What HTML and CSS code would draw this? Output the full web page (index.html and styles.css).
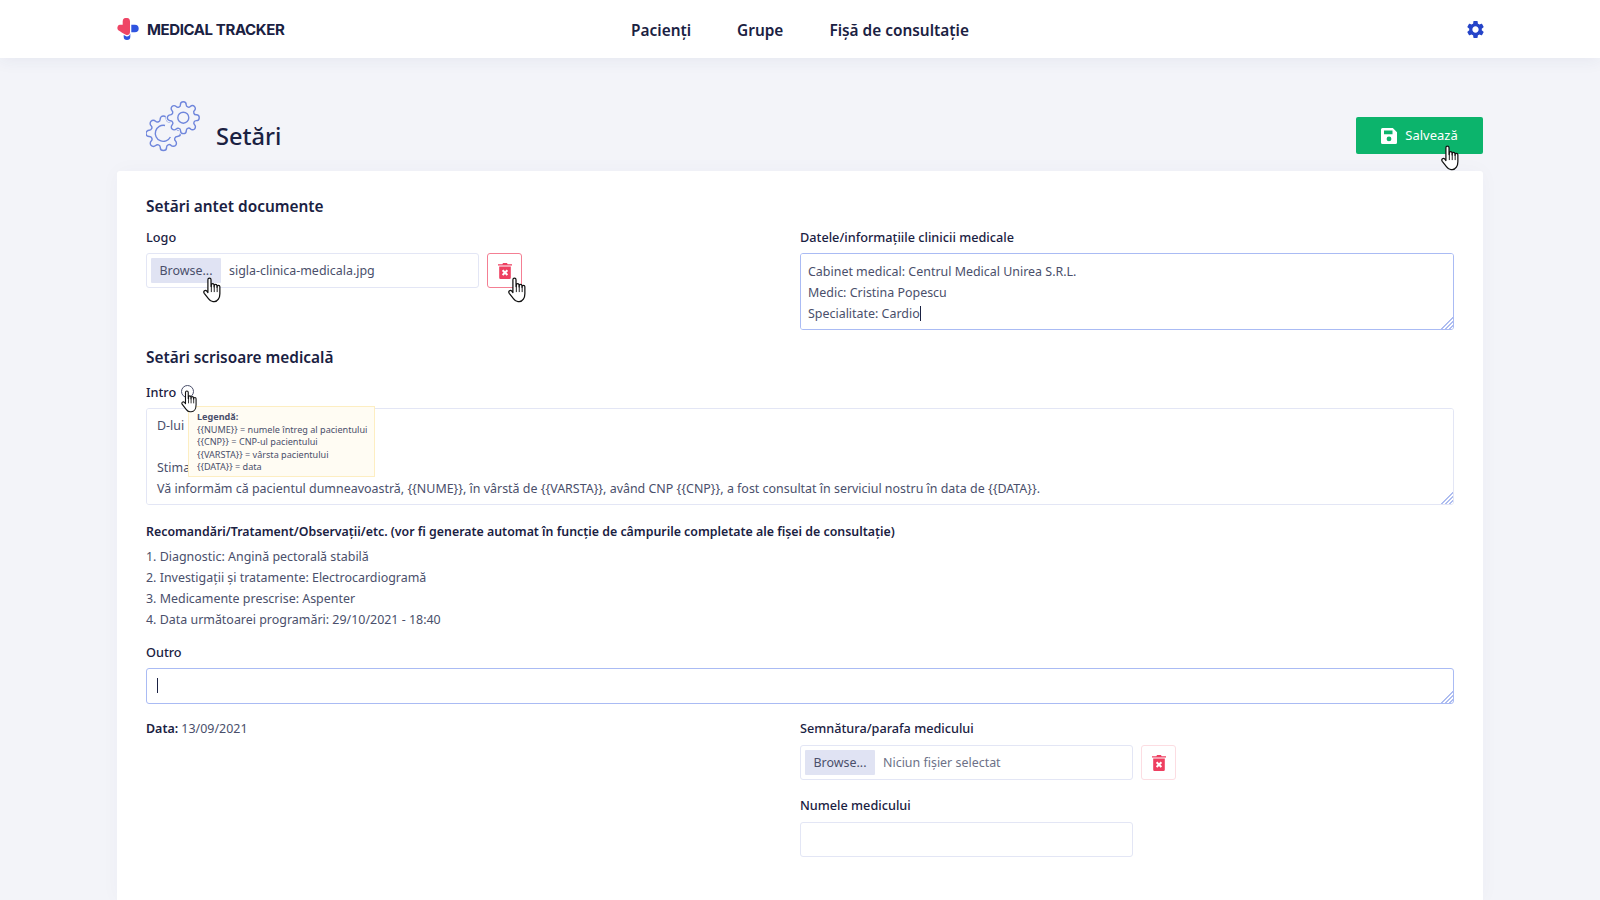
FILE: index.html
```html
<!DOCTYPE html>
<html lang="ro">

<head>
    <meta charset="UTF-8">
    <title>Medical Tracker - Setări</title>
    <link rel="stylesheet" href="styles.css">
</head>

<body>
    <svg class="defs" width="0" height="0">
        <defs>
            <symbol id="hand" viewBox="0 0 19 25">
                <path fill="#fff" stroke="#111" stroke-width="1.200" stroke-linejoin="round" d="M4.600 2.600a1.500 1.500 0 0 1 3 0v6.600h.3V7.700a1.300 1.300 0 0 1 2.600 0v1.700h.2V8.500a1.300 1.300 0 0 1 2.600 0v1.400h.2v-.5a1.300 1.300 0 0 1 2.600 0V16c0 4-2 7.600-5.400 7.600H9.500c-2 0-3.200-1-4.200-2.500L1.100 15.700c-.7-1-.5-1.900.2-2.500.8-.6 1.700-.3 2.300.4l1 1.300z" />
                <path fill="none" stroke="#111" stroke-width=".9" d="M7.900 9.500v5M10.700 9.500v5M13.500 10v4.500" />
            </symbol>
            <symbol id="trash" viewBox="0 0 14 16">
                <path fill="currentColor" d="M5 0h4l.6 1.200H14v1.300H0V1.200h4.400zM1.200 3.500h11.600v11.300a1.200 1.200 0 0 1-1.200 1.200H2.400a1.200 1.200 0 0 1-1.200-1.200z" />
                <path fill="none" stroke="#fff" stroke-width="2" d="M4.600 7.200l4.800 4.800M9.400 7.200l-4.800 4.800" />
            </symbol>
            <path id="gear" d="M19.400 15a1.650 1.650 0 0 0 .33 1.820l.06.06a2 2 0 0 1 0 2.830 2 2 0 0 1-2.830 0l-.06-.06a1.650 1.650 0 0 0-1.820-.33 1.650 1.650 0 0 0-1 1.510V21a2 2 0 0 1-2 2 2 2 0 0 1-2-2v-.09A1.650 1.650 0 0 0 9 19.400a1.650 1.650 0 0 0-1.820.33l-.06.06a2 2 0 0 1-2.830 0 2 2 0 0 1 0-2.830l.06-.06a1.650 1.650 0 0 0 .33-1.820 1.650 1.650 0 0 0-1.510-1H3a2 2 0 0 1-2-2 2 2 0 0 1 2-2h.09A1.650 1.650 0 0 0 4.600 9a1.650 1.650 0 0 0-.33-1.820l-.06-.06a2 2 0 0 1 0-2.830 2 2 0 0 1 2.830 0l.06.06a1.650 1.650 0 0 0 1.820.33H9a1.650 1.650 0 0 0 1-1.510V3a2 2 0 0 1 2-2 2 2 0 0 1 2 2v.09a1.650 1.650 0 0 0 1 1.510 1.650 1.650 0 0 0 1.820-.33l.06-.06a2 2 0 0 1 2.830 0 2 2 0 0 1 0 2.830l-.06.06a1.650 1.650 0 0 0-.33 1.820V9a1.650 1.650 0 0 0 1.510 1H21a2 2 0 0 1 2 2 2 2 0 0 1-2 2h-.09a1.650 1.650 0 0 0-1.510 1z" />
        </defs>
    </svg>

    <header class="topbar">
        <div class="container topbar-inner">
            <a class="brand" href="#">
                <svg class="brand-logo" viewBox="0 0 22 22" width="22" height="22">
                    <path fill="#ef4565" d="M5.700 3.600a3.650 3.650 0 0 1 7.300 0V14c0 2-1.500 3.500-3.500 3C7 16 3 13.500 1.300 12.300-.4 11 .2 7 3 6.800h2.700z" />
                    <path fill="#2f54e0" d="M14.300 6.700h3.600a3.800 3.800 0 0 1 0 7.600h-3.600zM13.300 15.500v3.200a3.300 3.300 0 0 1-6.600 0v-1.600c1 .6 2 1.100 2.800 1.300 1.700.3 3.300-.9 3.800-2.900z" />
                </svg>
                <span>MEDICAL TRACKER</span>
            </a>
            <nav class="nav">
                <a href="#">Pacienți</a>
                <a href="#">Grupe</a>
                <a href="#">Fișă de consultație</a>
            </nav>
            <a class="settings-link" href="#">
                <svg viewBox="0 0 24 24" width="21" height="21">
                    <path fill="#2544c8" d="M19.140 12.940c.04-.3.06-.61.06-.94 0-.32-.02-.64-.07-.94l2.030-1.580c.18-.14.23-.41.12-.61l-1.920-3.320c-.12-.22-.37-.29-.59-.22l-2.390.96c-.5-.38-1.030-.7-1.620-.94l-.36-2.540c-.04-.24-.24-.41-.48-.41h-3.840c-.24 0-.43.17-.47.41l-.36 2.540c-.59.24-1.130.57-1.620.94l-2.390-.96c-.22-.08-.47 0-.59.22L2.740 8.870c-.12.21-.08.47.12.61l2.030 1.580c-.05.3-.09.63-.09.94s.02.64.07.94l-2.030 1.580c-.18.14-.23.41-.12.61l1.920 3.320c.12.22.37.29.59.22l2.390-.96c.5.38 1.030.7 1.620.94l.36 2.540c.05.24.24.41.48.41h3.840c.24 0 .44-.17.47-.41l.36-2.540c.59-.24 1.130-.56 1.620-.94l2.390.96c.22.08.47 0 .59-.22l1.920-3.320c.12-.22.07-.47-.12-.61l-2.010-1.580zM12 15.600c-1.980 0-3.600-1.620-3.600-3.600s1.620-3.600 3.600-3.600 3.600 1.620 3.600 3.600-1.620 3.600-3.600 3.600z" />
                </svg>
            </a>
        </div>
    </header>

    <main class="container">
        <div class="page-head">
            <svg class="page-icon" viewBox="0 0 56 52" width="56" height="52">
                <g fill="none" stroke="#6f86dc">
                    <use href="#gear" transform="translate(-1.550 13.460) scale(1.570)" stroke-width=".9" />
                    <path stroke-width="1.400" d="M19 24.500a8 8 0 1 0 5.400 11.500" />
                    <use href="#gear" class="gear-gap" transform="translate(19.900 -.7) scale(1.450)" stroke-width="2.500" />
                    <use href="#gear" transform="translate(19.900 -.7) scale(1.450)" stroke-width=".97" />
                    <circle stroke-width="1.400" cx="37.300" cy="16.700" r="5.500" />
                </g>
            </svg>
            <h1 class="page-title">Setări</h1>
            <button class="btn-save">
                <svg viewBox="0 0 16 16" width="16" height="16">
                    <path fill="#fff" fill-rule="evenodd" d="M1.500 0h10.300L16 4.200v10.300a1.500 1.500 0 0 1-1.500 1.500h-13A1.500 1.500 0 0 1 0 14.500v-13A1.500 1.500 0 0 1 1.500 0zM3 2.500v3.700h8.500V2.500zM8 8.500a2.400 2.400 0 1 0 0 4.800 2.400 2.400 0 0 0 0-4.800z" />
                </svg>
                Salvează
                <svg class="hand hand-save"><use href="#hand" /></svg>
            </button>
        </div>

        <section class="card">
            <h2 class="section-title">Setări antet documente</h2>
            <div class="two-cols two-cols-top">
                <div class="field">
                    <label class="label label-tight">Logo</label>
                    <div class="file-row">
                        <div class="file-input">
                            <span class="browse">Browse...
                                <svg class="hand hand-browse"><use href="#hand" /></svg>
                            </span>
                            <span class="file-name">sigla-clinica-medicala.jpg</span>
                        </div>
                        <button class="btn-delete btn-delete-hover">
                            <svg width="14" height="16"><use href="#trash" /></svg>
                            <svg class="hand hand-delete"><use href="#hand" /></svg>
                        </button>
                    </div>
                </div>
                <div class="field">
                    <label class="label label-tight">Datele/informațiile clinicii medicale</label>
                    <div class="area-wrap">
                        <textarea class="area area-focus area-clinic">Cabinet medical: Centrul Medical Unirea S.R.L.
Medic: Cristina Popescu
Specialitate: Cardio</textarea>
                        <span class="caret caret-clinic"></span>
                    </div>
                </div>
            </div>

            <h2 class="section-title section-second">Setări scrisoare medicală</h2>
            <div class="field field-intro">
                <label class="label label-tight">Intro
                    <span class="info-icon"></span>
                    <svg class="hand hand-info"><use href="#hand" /></svg>
                </label>
                <div class="tooltip">
                    <strong>Legendă:</strong><br>
                    {{NUME}} = numele întreg al pacientului<br>
                    {{CNP}} = CNP-ul pacientului<br>
                    {{VARSTA}} = vârsta pacientului<br>
                    {{DATA}} = data
                </div>
                <textarea class="area area-intro">D-lui Doctor,

Stimate coleg,
Vă informăm că pacientul dumneavoastră, {{NUME}}, în vârstă de {{VARSTA}}, având CNP {{CNP}}, a fost consultat în serviciul nostru în data de {{DATA}}.</textarea>
            </div>

            <p class="recommend-title">Recomandări/Tratament/Observații/etc. (vor fi generate automat în funcție de câmpurile completate ale fișei de consultație)</p>
            <ol class="recommend-list">
                <li>1. Diagnostic: Angină pectorală stabilă</li>
                <li>2. Investigații și tratamente: Electrocardiogramă</li>
                <li>3. Medicamente prescrise: Aspenter</li>
                <li>4. Data următoarei programări: 29/10/2021 - 18:40</li>
            </ol>

            <div class="field field-outro">
                <label class="label label-tight">Outro</label>
                <div class="area-wrap">
                    <textarea class="area area-focus area-outro"></textarea>
                    <span class="caret caret-outro"></span>
                </div>
            </div>

            <div class="two-cols two-cols-bottom">
                <p class="date-line"><strong>Data:</strong> 13/09/2021</p>
                <div>
                    <div class="field">
                        <label class="label">Semnătura/parafa medicului</label>
                        <div class="file-row">
                            <div class="file-input">
                                <span class="browse">Browse...</span>
                                <span class="file-name file-empty">Niciun fișier selectat</span>
                            </div>
                            <button class="btn-delete">
                                <svg width="14" height="16"><use href="#trash" /></svg>
                            </button>
                        </div>
                    </div>
                    <div class="field field-doctor">
                        <label class="label">Numele medicului</label>
                        <input class="text-input" type="text">
                    </div>
                </div>
            </div>
        </section>
    </main>
</body>

</html>
```

FILE: styles.css
```css
* {
    box-sizing: border-box;
}
html, body {
    margin: 0;
    padding: 0;
    height: 100%;
    overflow: hidden;
}
body {
    background-color: #f3f4f9;
    color: #4a4f6b;
    font-family: "Noto Sans", "Open Sans", sans-serif;
    font-size: 12.450px;
    line-height: 21px;
}
a {
    color: inherit;
    text-decoration: none;
}
.defs {
    position: absolute;
}
.container {
    width: 1366px;
    margin: 0 auto;
}

/* top bar */
.topbar {
    height: 58px;
    background: #fff;
    box-shadow: 0 2px 16px rgba(40, 50, 110, 0.07);
}
.topbar-inner {
    height: 100%;
    display: grid;
    grid-template-columns: 1fr auto 1fr;
    align-items: center;
}
.brand {
    display: flex;
    align-items: center;
    gap: 8px;
    color: #1a2142;
    font-family: Inter, "Noto Sans", sans-serif;
    font-size: 15px;
    font-weight: 700;
    letter-spacing: -0.4px;
}
.nav {
    display: flex;
    gap: 46px;
    padding-top: 2px;
    color: #1a2142;
    font-size: 15.400px;
    font-weight: 600;
}
.settings-link {
    justify-self: end;
    display: flex;
    margin-right: -3px;
}

/* page heading */
.page-head {
    display: flex;
    align-items: flex-end;
    height: 54px;
    margin-top: 42px;
    margin-bottom: 17px;
}
.page-icon {
    align-self: flex-start;
    margin-top: 1px;
    margin-left: 29px;
    margin-right: 14px;
}
.page-icon .gear-gap {
    stroke: #f3f4f9;
    fill: #f3f4f9;
}
.page-title {
    margin: 0;
    color: #1a2142;
    font-size: 23.600px;
    font-weight: 500;
    line-height: 36px;
}
.btn-save {
    position: relative;
    display: flex;
    align-items: center;
    justify-content: center;
    gap: 8px;
    width: 127px;
    height: 37px;
    margin-left: auto;
    border: 0;
    border-radius: 2px;
    background: #0cb46c;
    color: #fff;
    font: inherit;
    font-size: 13px;
}

/* card */
.card {
    padding: 24px 29px 43px;
    background: #fff;
    border-radius: 3px 3px 0 0;
    box-shadow: 0 0 20px rgba(40, 50, 110, 0.03);
}
.section-title {
    margin: 0;
    color: #1a2142;
    font-size: 15.400px;
    font-weight: 600;
    line-height: 24px;
}
.section-second {
    margin-top: 16px;
}
.two-cols {
    display: grid;
    grid-template-columns: 1fr 1fr;
}
.two-cols-top {
    margin-top: 8px;
}
.two-cols-bottom {
    margin-top: 14px;
}
.label {
    display: block;
    margin-bottom: 6px;
    color: #1a2142;
    font-size: 12.700px;
    font-weight: 500;
}
.label-tight {
    margin-bottom: 5px;
}
.field-intro {
    position: relative;
    margin-top: 12px;
}
.field-outro {
    margin-top: 12px;
}
.field-doctor {
    margin-top: 15px;
}
.file-row {
    display: flex;
    gap: 8px;
}
.file-input {
    display: flex;
    align-items: center;
    gap: 8px;
    width: 333px;
    height: 35px;
    padding: 0 4px;
    border: 1px solid #e3e6f5;
    border-radius: 3px;
}
.browse {
    position: relative;
    width: 70px;
    height: 25px;
    border-radius: 1px;
    background: #e0e3f3;
    line-height: 25px;
    text-align: center;
}
.file-empty {
    color: #6d7187;
}
.btn-delete {
    position: relative;
    display: flex;
    align-items: center;
    justify-content: center;
    width: 35px;
    height: 35px;
    padding: 0;
    border: 1px solid #fcdde2;
    border-radius: 3px;
    background: #fff;
    color: #ee3f60;
}
.btn-delete-hover {
    border-color: #f47f93;
}
.text-input {
    display: block;
    width: 333px;
    height: 35px;
    border: 1px solid #e3e6f5;
    border-radius: 3px;
    outline: none;
}
.area-wrap {
    position: relative;
}
.area {
    display: block;
    width: 100%;
    padding: 6px 7px;
    border: 1px solid #e3e6f5;
    border-radius: 3px;
    outline: none;
    background: #fff;
    color: #4a4f6b;
    font: inherit;
    resize: vertical;
}
.area::-webkit-resizer {
    background: linear-gradient(135deg, transparent 58%, #aebdf0 58% 64%, transparent 64% 72%, #aebdf0 72% 78%, transparent 78% 86%, #aebdf0 86% 92%, transparent 92%);
}
.area-focus {
    border-color: #aabbf4;
}
.area-clinic {
    height: 77px;
    padding-top: 7px;
}
.area-intro {
    height: 97px;
    padding: 6px 10px;
}
.area-outro {
    height: 36px;
    padding: 6px 10px;
}
.caret {
    position: absolute;
    width: 1px;
    height: 15px;
    background: #1a2142;
}
.caret-clinic {
    left: 120px;
    top: 53px;
}
.caret-outro {
    left: 11px;
    top: 10px;
}
.info-icon {
    display: inline-block;
    width: 13px;
    height: 13px;
    margin-left: 2px;
    border: 1px solid #4a4f6b;
    border-radius: 50%;
    vertical-align: -1px;
}
.tooltip {
    position: absolute;
    z-index: 2;
    left: 42px;
    top: 24px;
    width: 187px;
    height: 71px;
    padding: 4px 8px;
    border: 1px solid #fdeec2;
    background: #fffcf3;
    color: #4a4f6b;
    font-size: 9.100px;
    line-height: 12.500px;
    white-space: nowrap;
}
.recommend-title {
    margin: 16px 0 0;
    color: #1a2142;
    font-size: 12.370px;
    font-weight: 600;
}
.recommend-list {
    margin: 4px 0 0;
    padding: 0;
    list-style: none;
}
.date-line {
    margin: 0;
}
.date-line strong {
    color: #1a2142;
    font-weight: 600;
}

/* mouse pointers drawn in the screenshot */
.hand {
    position: absolute;
    z-index: 3;
    width: 20px;
    height: 26px;
}
.hand-save {
    left: 85px;
    top: 28px;
}
.hand-browse {
    left: 52px;
    top: 19px;
}
.hand-delete {
    left: 20px;
    top: 23px;
}
.hand-info {
    left: 35px;
    top: 8px;
    width: 18px;
    height: 23px;
}
```
